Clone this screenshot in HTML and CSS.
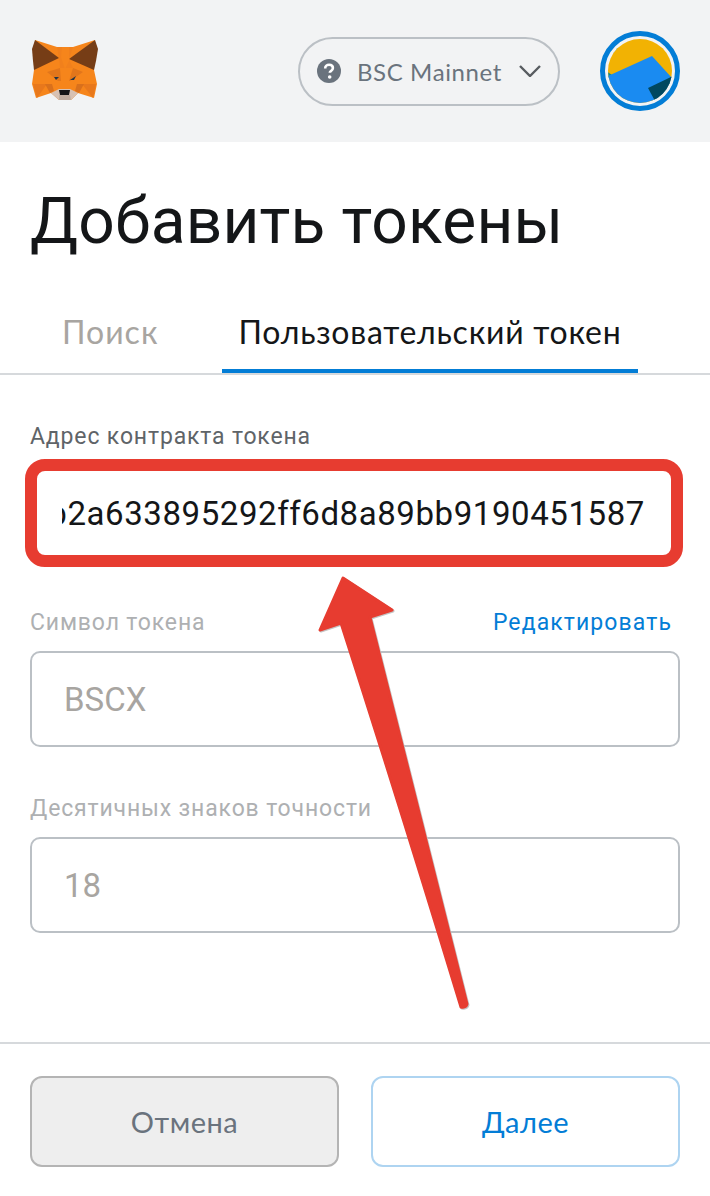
FILE: index.html
```html
<!DOCTYPE html>
<html lang="ru">
<head>
<meta charset="UTF-8">
<title>Добавить токены</title>
<link rel="stylesheet" href="styles.css">
</head>
<body>
<div class="page">
  <div class="header">
    <svg class="fox" viewBox="30 38 70 68">
      <polygon fill="#f6851b" points="35,41 57,48 73,48 95,41 94,71 97,85 94,99 78,94 71,101 59,101 51,94 36,99 32,85 34,71"/>
      <polygon fill="#763d16" points="35,41 59,59 34,71 33,62 32,50"/>
      <polygon fill="#763d16" points="95,41 69,60 94,71 96,62 98,50"/>
      <polygon fill="#f1801c" points="57,48 62,48 61,58 65,70 60,69 59,59"/>
      <polygon fill="#f1801c" points="73,48 69,48 69,62 65,70 73,69 69,60"/>
      <polygon fill="#e2761b" points="47,73 60,69 73,69 83,73 70,82 58,82"/>
      <polygon fill="#f6851b" points="60,69 73,69 69,82 61,82"/>
      <polygon fill="#e8781c" points="33,85 47,85 37,99"/>
      <polygon fill="#e8781c" points="96,85 82,85 93,99"/>
      <polygon fill="#d9701c" points="45,85 52,85 54,92 50,94"/>
      <polygon fill="#d9701c" points="84,85 77,85 75,92 79,94"/>
      <polygon fill="#233447" points="54,78 59,78 56,81"/>
      <polygon fill="#233447" points="70,81 76,77 74,81"/>
      <polygon fill="#d7c1b3" points="51,94 59,90 70,90 78,94 71,101 59,101"/>
      <polygon fill="#c0ad9e" points="59,96 70,96 71,101 59,101"/>
      <polygon fill="#161616" points="59,91 70,91 69,96 60,96"/>
    </svg>
    <div class="network">
      <svg class="network-icon" viewBox="0 0 24 24">
        <circle cx="12" cy="12" r="12" fill="#6a737d"/>
        <path d="M8.2 9.4c0-2.2 1.8-3.6 3.9-3.6 2.2 0 3.8 1.3 3.8 3.2 0 1.6-.9 2.4-2 3.1-.8.5-1.1.9-1.1 1.7" fill="none" stroke="#fff" stroke-width="2.6"/>
        <circle cx="12.7" cy="18" r="1.8" fill="#fff"/>
      </svg>
      <span class="network-name">BSC Mainnet</span>
      <svg class="chevron" viewBox="0 0 22 12">
        <path d="M1 1l10 10L21 1" fill="none" stroke="#585c60" stroke-width="2.4"/>
      </svg>
    </div>
    <div class="avatar">
      <svg viewBox="608 38 64 64">
        <defs><clipPath id="disc"><circle cx="640" cy="70" r="32"/></clipPath></defs>
        <g clip-path="url(#disc)">
          <rect x="608" y="38" width="64" height="64" fill="#f2b203"/>
          <polygon fill="#0a8a8f" points="606,60 622,42 612,42 604,52"/>
          <polygon fill="#0a8a8f" points="606,70 612,74 606,78"/>
          <polygon fill="#1a8bf1" points="608,75 652,55 672,77 664,110 600,110"/>
          <polygon fill="#01485f" points="648,87 675,74 675,100 655,100"/>
        </g>
      </svg>
    </div>
  </div>

  <h1 class="title">Добавить токены</h1>

  <div class="tabs">
    <div class="tab tab-search">Поиск</div>
    <div class="tab tab-custom">Пользовательский токен</div>
  </div>

  <div class="form">
    <div class="field">
      <div class="label-row"><span class="label label-dark">Адрес контракта токена</span></div>
      <div class="input input-address">
        <span class="address-clip"><span>0x5ac52ee5b2a633895292ff6d8a89bb9190451587</span></span>
        <div class="highlight"></div>
      </div>
    </div>
    <div class="field">
      <div class="label-row">
        <span class="label">Символ токена</span>
        <a class="edit">Редактировать</a>
      </div>
      <div class="input input-muted">BSCX</div>
    </div>
    <div class="field">
      <div class="label-row"><span class="label">Десятичных знаков точности</span></div>
      <div class="input input-muted">18</div>
    </div>
  </div>

  <div class="footer">
    <div class="btn btn-cancel">Отмена</div>
    <div class="btn btn-next">Далее</div>
  </div>

  <svg class="arrow" viewBox="0 0 710 1196">
    <path d="M343 578 L392 610 L370 617 Q418 810 467 1004 Q466 1008 461 1007 Q398 800 341 623 L320 630 Z" fill="#e73c30" stroke="#e73c30" stroke-width="3" stroke-linejoin="round"/>
  </svg>
</div>
</body>
</html>
```

FILE: styles.css
```css
* {
  box-sizing: border-box;
}
html, body {
  margin: 0;
  padding: 0;
  background: #fff;
}
body {
  font-family: "Roboto", "Liberation Sans", sans-serif;
}

.page {
  position: relative;
  width: 710px;
  height: 1196px;
  overflow: hidden;
}

/* header */
.header {
  display: flex;
  align-items: center;
  height: 142px;
  padding: 0 30px;
  background-color: #f2f3f4;
}
.fox {
  width: 70px;
  height: 68px;
}
.network {
  display: flex;
  align-items: center;
  width: 262px;
  height: 69px;
  margin-left: auto;
  padding-left: 17px;
  border: 2px solid #bbc0c5;
  border-radius: 35px;
}
.network-icon {
  width: 24px;
  height: 24px;
}
.network-name {
  margin-left: 16px;
  font-family: "Lato", sans-serif;
  font-size: 24px;
  letter-spacing: 0.6px;
  color: #6a737d;
}
.chevron {
  width: 22px;
  height: 12px;
  margin-left: 17px;
}
.avatar {
  width: 80px;
  height: 80px;
  margin-left: 40px;
  padding: 3px;
  border: 5px solid #037dd6;
  border-radius: 50%;
}
.avatar svg {
  display: block;
  width: 64px;
  height: 64px;
}

/* title and tabs */
.title {
  margin: 41px 0 0 30px;
  font-family: "Roboto", sans-serif;
  font-size: 64px;
  line-height: 78px;
  letter-spacing: 0.2px;
  font-weight: 400;
  color: #141618;
}
.tabs {
  display: flex;
  height: 74px;
  margin-top: 40px;
  padding-left: 30px;
  border-bottom: 2px solid #d6d9dc;
}
.tab {
  height: 72px;
  padding-top: 11px;
  font-family: "Lato", sans-serif;
  font-size: 32px;
}
.tab-search {
  width: 192px;
  padding-left: 32px;
  letter-spacing: 1px;
  color: #a8a5a1;
}
.tab-custom {
  width: 416px;
  text-align: center;
  letter-spacing: 0.75px;
  color: #141618;
  border-bottom: 4px solid #037dd6;
}

/* form */
.form {
  padding: 0 30px;
}
.field {
  margin-top: 47px;
}
.field:first-child {
  margin-top: 47px;
}
.label-row {
  display: flex;
  justify-content: space-between;
  height: 30px;
}
.label {
  font-size: 23px;
  line-height: 30px;
  letter-spacing: 0.85px;
  color: #aeb0b2;
}
.label-dark {
  color: #5f6468;
}
.edit {
  margin-right: 8px;
  font-size: 23px;
  line-height: 30px;
  letter-spacing: 1.1px;
  color: #037dd6;
}
.input {
  position: relative;
  display: flex;
  align-items: center;
  height: 96px;
  margin-top: 13px;
  padding-left: 32px;
  border: 2px solid #bbc0c5;
  border-radius: 10px;
  font-size: 33px;
}
.input-muted {
  color: #a8a5a1;
}
.input-address {
  padding: 0;
  border-color: transparent;
}
.address-clip {
  display: flex;
  justify-content: flex-end;
  width: 583px;
  margin-left: 30px;
  overflow: hidden;
  white-space: nowrap;
  font-size: 33px;
  letter-spacing: 0.58px;
  color: #141618;
}
.highlight {
  position: absolute;
  top: -8px;
  left: -7px;
  right: -5px;
  bottom: -8px;
  border: 12px solid #e73c30;
  border-radius: 20px;
}

/* footer */
.footer {
  position: absolute;
  left: 0;
  right: 0;
  top: 1042px;
  display: flex;
  gap: 32px;
  padding: 32px 30px 0;
  border-top: 2px solid #d6d9dc;
}
.btn {
  display: flex;
  align-items: center;
  justify-content: center;
  flex: 1;
  height: 91px;
  border-radius: 12px;
  font-family: "Lato", sans-serif;
  font-size: 29px;
  letter-spacing: 0.5px;
}
.btn-cancel {
  background-color: #eee;
  border: 2px solid #b4b4b4;
  color: #6a737d;
}
.btn-next {
  background-color: #fff;
  border: 2px solid #aed4f1;
  color: #037dd6;
}

/* annotation drawn over the form */
.arrow {
  position: absolute;
  top: 0;
  left: 0;
  width: 710px;
  height: 1196px;
  filter: drop-shadow(1px 1px 0 #c4c4c4);
}
```
